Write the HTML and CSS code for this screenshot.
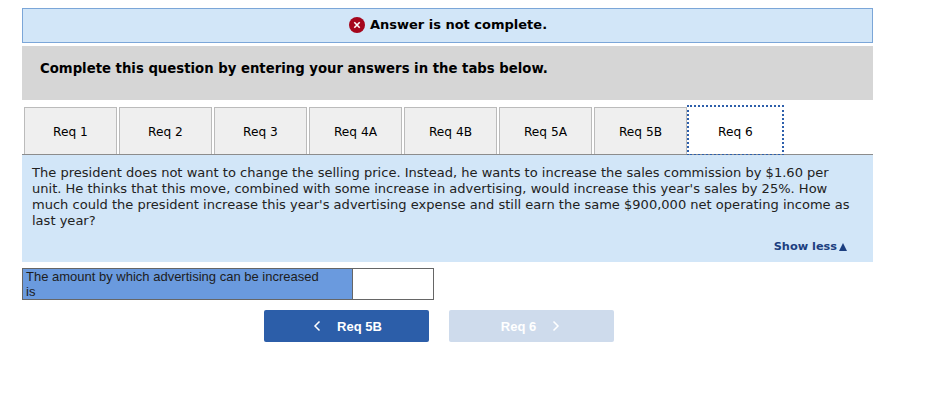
FILE: index.html
```html
<!DOCTYPE html>
<html lang="en">
<head>
    <meta charset="UTF-8">
    <title>Answer is not complete</title>
    <link rel="stylesheet" href="styles.css">
</head>
<body>

    <div class="alert">
        <svg class="alert-icon" width="16" height="16" viewBox="0 0 16 16">
            <circle cx="8" cy="8" r="8" fill="#a5061c"/>
            <path d="M5.3 5.3l5.4 5.4M10.7 5.3l-5.4 5.4" stroke="#fff" stroke-width="1.6"/>
        </svg>
        <span>Answer is not complete.</span>
    </div>

    <div class="instructions">Complete this question by entering your answers in the tabs below.</div>

    <div class="tabs">
        <div class="tab">Req 1</div>
        <div class="tab">Req 2</div>
        <div class="tab">Req 3</div>
        <div class="tab">Req 4A</div>
        <div class="tab">Req 4B</div>
        <div class="tab">Req 5A</div>
        <div class="tab">Req 5B</div>
        <div class="tab active">Req 6</div>
    </div>

    <div class="question">
        <p>The president does not want to change the selling price. Instead, he wants to increase the sales commission by $1.60 per unit. He thinks that this move, combined with some increase in advertising, would increase this year's sales by 25%. How much could the president increase this year's advertising expense and still earn the same $900,000 net operating income as last year?</p>
        <div class="show-less">Show less<span class="arrow"></span></div>
    </div>

    <table class="answer">
        <tr>
            <td class="label">The amount by which advertising can be increased is</td>
            <td class="input"></td>
        </tr>
    </table>

    <div class="nav">
        <div class="btn prev">
            <svg width="8" height="12" viewBox="0 0 8 12"><path d="M6.5 1.5L2 6l4.5 4.5" fill="none" stroke="#fff" stroke-width="1.5"/></svg>
            <span>Req 5B</span>
        </div>
        <div class="btn disabled">
            <span>Req 6</span>
            <svg width="8" height="12" viewBox="0 0 8 12"><path d="M1.5 1.5L6 6l-4.5 4.5" fill="none" stroke="#fff" stroke-width="1.5"/></svg>
        </div>
    </div>

</body>
</html>
```

FILE: styles.css
```css
html, body {
    background: #fff;
}
body {
    font-family: "DejaVu Sans", Verdana, sans-serif;
    font-size: 13px;
    color: #000;
    margin: 0;
    padding: 8px 72px 0 22px;
}
.alert {
    height: 35px;
    box-sizing: border-box;
    background: #d2e6f8;
    border: 1px solid #7ba6d8;
    display: flex;
    align-items: center;
    justify-content: center;
    gap: 5px;
    font-weight: bold;
    padding-left: 1px;
    padding-bottom: 2px;
}
.alert-icon {
    flex: none;
}
.instructions {
    height: 54px;
    box-sizing: border-box;
    margin-top: 3px;
    padding: 15px 18px 0;
    background: #d6d6d6;
    font-size: 13.25px;
    font-weight: bold;
    line-height: 16px;
}
.tabs {
    display: flex;
    gap: 2px;
    margin-top: 7px;
    padding-left: 2px;
    height: 48px;
    box-sizing: border-box;
    border-bottom: 1px solid #8c8c8c;
}
.tab {
    width: 93px;
    height: 47px;
    box-sizing: border-box;
    background: #efefef;
    border: 1px solid #bbb;
    border-bottom: none;
    font-size: 12.2px;
    text-align: center;
    line-height: 48px;
}
.tab.active {
    background: #fff;
    border-color: #fff;
    outline: 2px dotted #2d5fab;
}
.question {
    height: 107px;
    box-sizing: border-box;
    background: #d2e6f8;
    padding: 10px 18px 0 10px;
    position: relative;
}
.question p {
    margin: 0;
    font-size: 13.04px;
    line-height: 16px;
    color: #222;
}
.show-less {
    position: absolute;
    right: 26px;
    bottom: 9px;
    font-size: 11.3px;
    font-weight: bold;
    color: #1c3f80;
    display: flex;
    align-items: center;
    gap: 2px;
}
.arrow {
    width: 0;
    height: 0;
    border-left: 4.5px solid transparent;
    border-right: 4.5px solid transparent;
    border-bottom: 8px solid #1c3f80;
}
.answer {
    border-collapse: collapse;
    margin-top: 6px;
    width: 412px;
    height: 32px;
    font-family: "Liberation Sans", Arial, sans-serif;
    font-size: 13px;
    line-height: 15px;
}
.answer td {
    border: 1px solid #666;
    padding: 0;
}
.label {
    width: 330px;
    background: #6a9ade;
    color: #1d1d1d;
    padding: 0 30px 0 3px !important;
    box-sizing: border-box;
}
.input {
    background: #fff;
}
.nav {
    display: flex;
    gap: 20px;
    margin-top: 10px;
    padding-left: 242px;
}
.btn {
    width: 165px;
    height: 32px;
    box-sizing: border-box;
    background: #2c5ea9;
    border-radius: 2px;
    color: #fff;
    font-family: "Liberation Sans", Arial, sans-serif;
    font-size: 13px;
    font-weight: bold;
    display: flex;
    align-items: center;
    justify-content: center;
    gap: 16px;
}
.btn.prev {
    padding-left: 2px;
}
.btn.disabled {
    background: #cedbec;
    padding-right: 2px;
}
```
